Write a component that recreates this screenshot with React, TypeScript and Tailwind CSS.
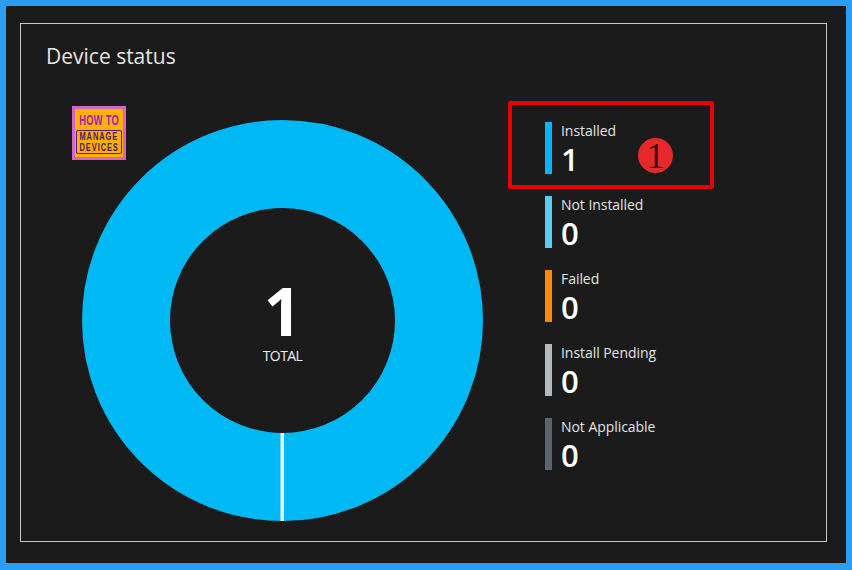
const items = [
  { label: "Installed", value: "1", bar: "bg-[#00b7f1]" },
  { label: "Not Installed", value: "0", bar: "bg-[#5ccbf2]" },
  { label: "Failed", value: "0", bar: "bg-[#f98a00]" },
  { label: "Install Pending", value: "0", bar: "bg-[#b4b9bd]" },
  { label: "Not Applicable", value: "0", bar: "bg-[#5b6570]" },
];

function Logo() {
  return (
    <div className="absolute left-[51px] top-[82px] w-[54px] h-[54px] border-[3px] border-[#d765c4] bg-[#fdb000] flex flex-col items-center font-['Liberation_Sans',sans-serif]">
      <div className="mt-[4px] h-[14px] text-[#a81eb4] text-[15px] leading-[14px] font-bold tracking-[0.5px] scale-x-[0.62] whitespace-nowrap">HOW TO</div>
      <div className="mt-[3px] w-[46px] h-[24px] shrink-0 border border-[#5a1a70] rounded-[2px] flex flex-col items-center justify-center text-[#4e1670] text-[10px] leading-[11px] font-bold">
        <span className="scale-x-[0.75] tracking-[1.2px] whitespace-nowrap">MANAGE</span>
        <span className="scale-x-[0.75] tracking-[1.2px] whitespace-nowrap">DEVICES</span>
      </div>
    </div>
  );
}

function Donut() {
  return (
    <div className="relative w-[401px] h-[401px] shrink-0">
      <svg width="401" height="401" viewBox="0 0 401 401" className="block">
        <circle cx="200.5" cy="200.5" r="156.5" fill="none" stroke="#00b8f3" strokeWidth="88" />
        <rect x="198.5" y="313" width="3.5" height="88" fill="#eaf8fd" />
      </svg>
      <div className="absolute inset-0 flex flex-col items-center text-white font-['Open_Sans',sans-serif]">
        <div className="mt-[158px] text-[66px] leading-[64px] font-bold">1</div>
        <div className="mt-[5px] text-[14px] leading-[18px] tracking-[-0.6px] text-[#eeeeee]">TOTAL</div>
      </div>
    </div>
  );
}

export default function App() {
  return (
    <div className="w-[852px] h-[570px] border-[6px] border-b-[7px] border-[#2a9df4] bg-[#1b1b1b] p-[14px] pt-[17px] pb-[21px] font-['Open_Sans',sans-serif]">
      <div className="relative w-[807px] h-[519px] border border-[#c9c9c9] pl-[25px] pt-[17px]">
        <h1 className="text-[21px] leading-[30px] text-[#e6e6e6]">Device status</h1>
        <Logo />
        <div className="flex mt-[49px] pl-[36px]">
          <Donut />
          <div className="ml-[62px] mt-[2px] flex flex-col gap-[22px]">
            {items.map((it) => (
              <div key={it.label} className="flex h-[52px] gap-[9px]">
                <div className={`w-[7px] h-full ${it.bar}`} />
                <div className="flex flex-col">
                  <div className="text-[14px] leading-[18px] tracking-[-0.05px] text-[#e4e4e4] whitespace-nowrap">{it.label}</div>
                  <div className="mt-[2px] text-[31px] leading-[34px] font-semibold text-white">{it.value}</div>
                </div>
              </div>
            ))}
          </div>
        </div>
        <div className="absolute left-[487px] top-[77px] w-[206px] h-[88px] border-[4px] border-[#e60000] rounded-[2px]" />
        <div className="absolute left-[617px] top-[114px] w-[35px] h-[35px] rounded-full bg-[#e8282b] flex items-center justify-center text-[#3a1010] text-[36px] leading-none font-['Liberation_Serif',serif]">1</div>
      </div>
    </div>
  );
}
